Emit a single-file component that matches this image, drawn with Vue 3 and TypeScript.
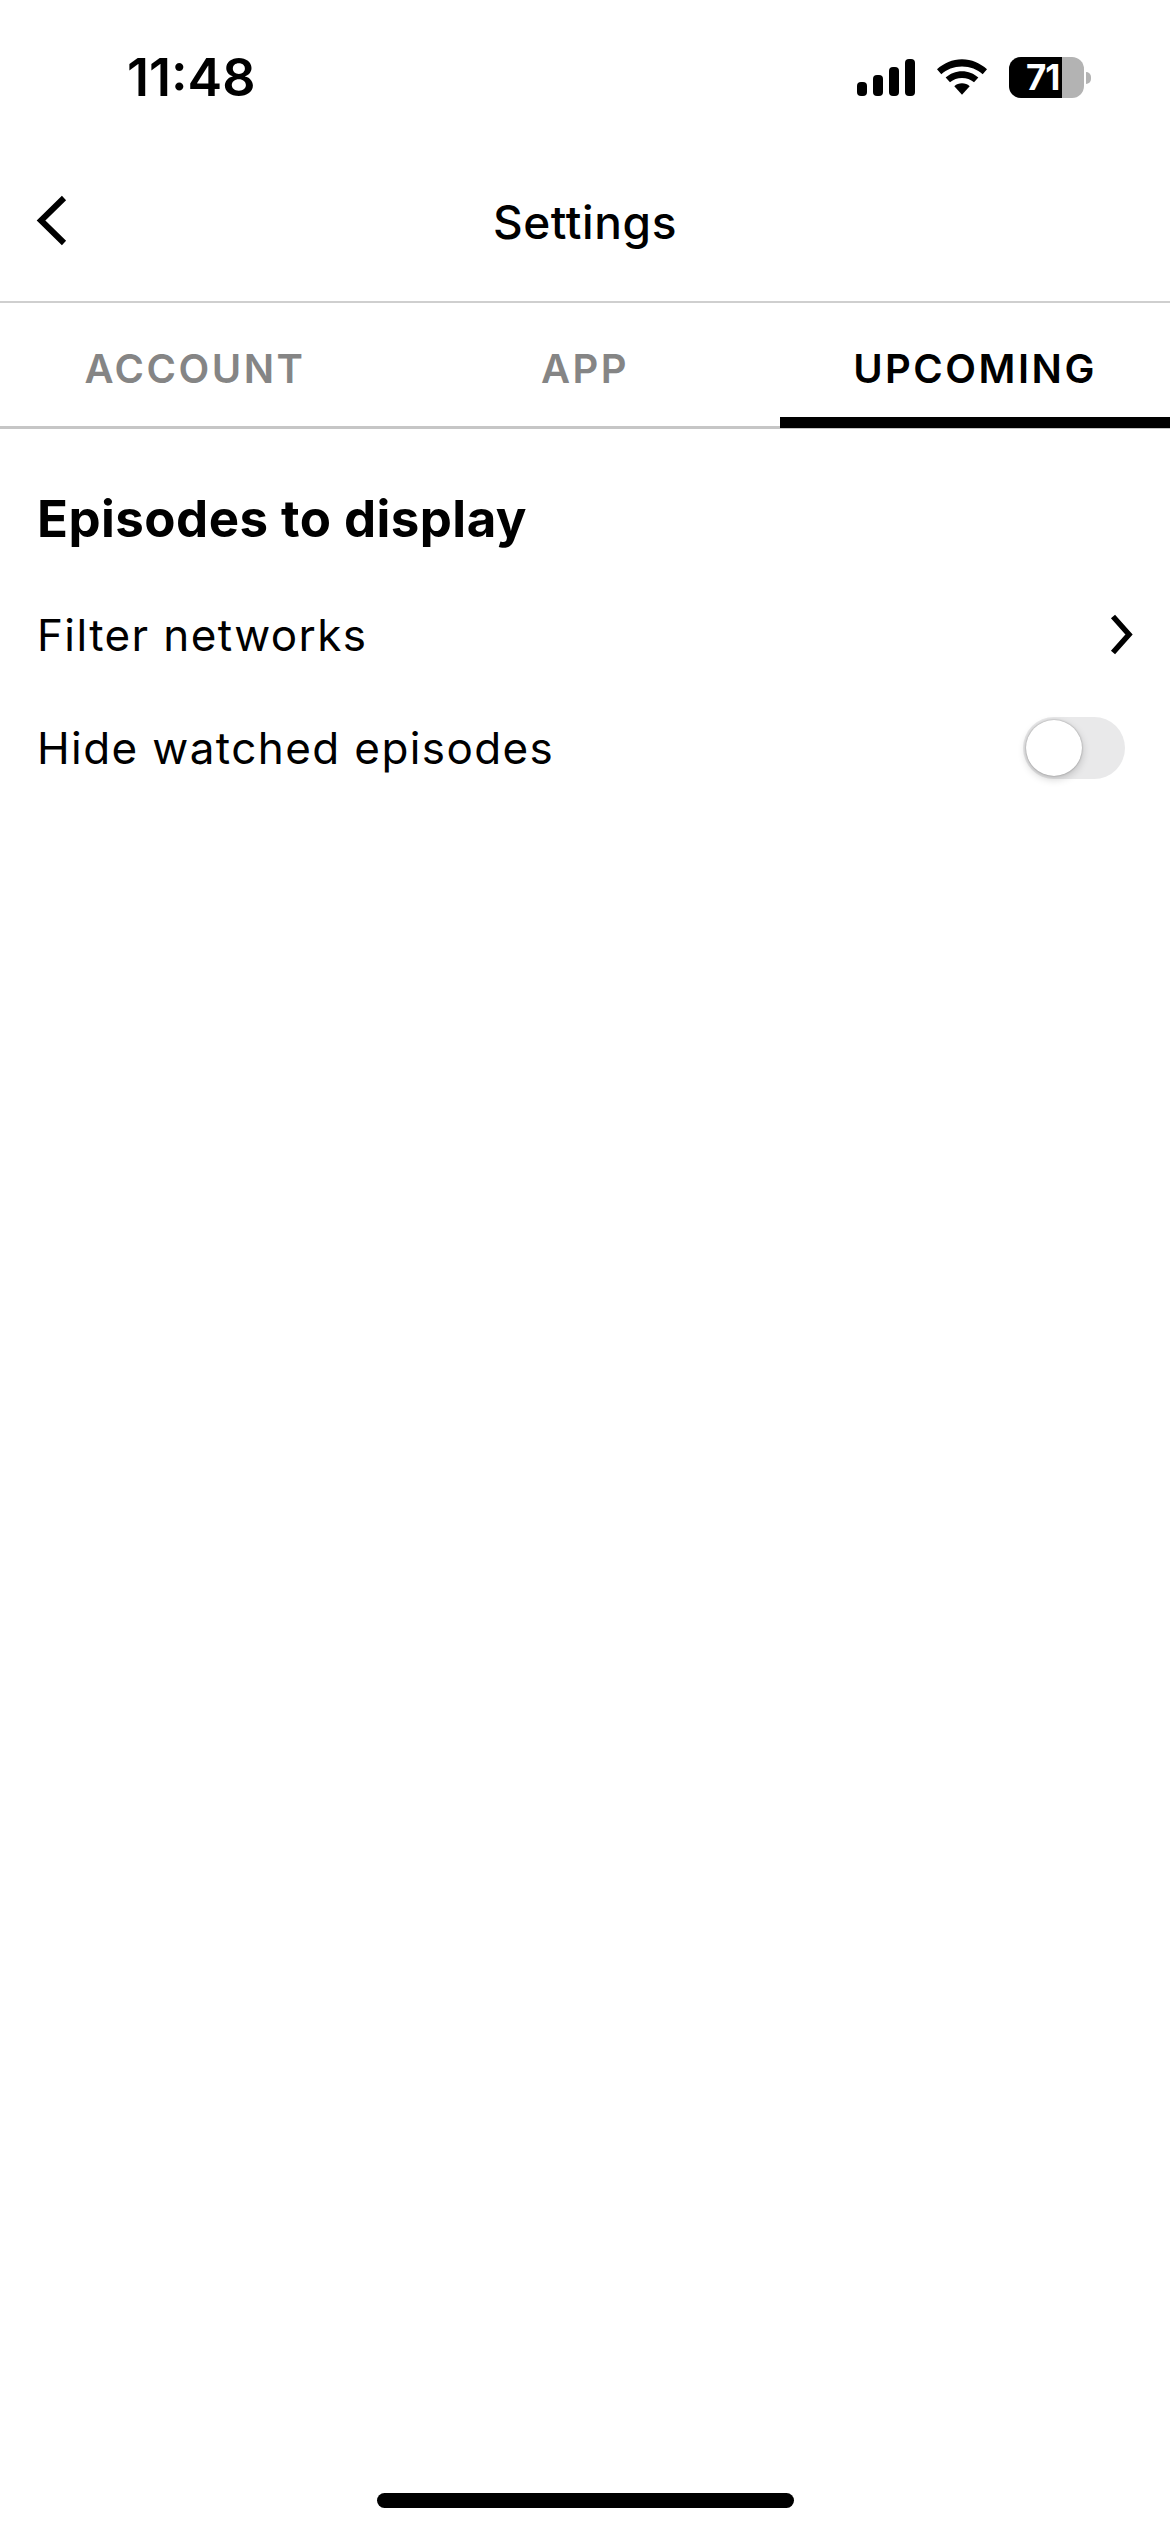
<script setup lang="ts">
import { ref } from 'vue';

const tabs = ['ACCOUNT', 'APP', 'UPCOMING'];
const activeTab = ref('UPCOMING');
const hideWatched = ref(false);
</script>

<template>
  <div class="screen">
    <div class="status">
      <span class="time">11:48</span>
      <div class="status-icons">
        <svg class="signal" width="58" height="37" viewBox="0 0 58 37">
          <rect x="0" y="23" width="10" height="14" rx="4" />
          <rect x="16" y="16" width="10" height="21" rx="4" />
          <rect x="32" y="8" width="10" height="29" rx="4" />
          <rect x="48" y="0" width="10" height="37" rx="4" />
        </svg>
        <svg class="wifi" width="50" height="37" viewBox="0 0 52 38">
          <path d="M26 0C16 0 7 4 0 10.500L4.500 15.500C10 10.500 17.500 7.500 26 7.500C34.500 7.500 42 10.500 47.500 15.500L52 10.500C45 4 36 0 26 0Z" />
          <path d="M26 12.500C19.500 12.500 13.500 15 9 19L13.500 24C17 21 21.300 19.500 26 19.500C30.700 19.500 35 21 38.500 24L43 19C38.500 15 32.500 12.500 26 12.500Z" />
          <path d="M26 25C23 25 20.300 26 18 28L26 37L34 28C31.700 26 29 25 26 25Z" />
        </svg>
        <div class="battery">
          <div class="battery-body">
            <div class="battery-fill"></div>
            <span class="battery-num">71</span>
          </div>
          <div class="battery-cap"></div>
        </div>
      </div>
    </div>

    <header class="nav">
      <svg class="back" width="36" height="54" viewBox="0 0 36 54">
        <path d="M31 5L8 27.500L31 50" fill="none" stroke="#000" stroke-width="6" />
      </svg>
      <span class="title">Settings</span>
    </header>

    <nav class="tabs">
      <button
        v-for="tab in tabs"
        :key="tab"
        class="tab"
        :class="{ active: tab === activeTab }"
        @click="activeTab = tab"
      >
        {{ tab }}
      </button>
    </nav>

    <main class="content">
      <h2 class="heading">Episodes to display</h2>
      <div class="row first">
        <span>Filter networks</span>
        <svg class="chevron" width="24" height="42" viewBox="0 0 24 42">
          <path d="M4 2.500L20 20.500L4 38.500" fill="none" stroke="#000" stroke-width="5.500" />
        </svg>
      </div>
      <div class="row">
        <span>Hide watched episodes</span>
        <div class="toggle" :class="{ on: hideWatched }" @click="hideWatched = !hideWatched">
          <div class="knob"></div>
        </div>
      </div>
    </main>

    <div class="home-bar"></div>
  </div>
</template>

<style>
html,
body {
  margin: 0;
  padding: 0;
  background: #fff;
}
</style>

<style scoped>
.screen {
  position: relative;
  width: 1170px;
  height: 2532px;
  background: #fff;
  color: #000;
  font-family: Inter, 'Noto Sans', sans-serif;
  overflow: hidden;
}

.status {
  height: 152px;
  box-sizing: border-box;
  padding: 0 79px 0 127px;
  display: flex;
  justify-content: space-between;
  align-items: flex-start;
}

.time {
  margin-top: 47px;
  font-size: 52px;
  line-height: 62px;
  font-weight: 600;
}

.status-icons {
  margin-top: 57px;
  height: 41px;
  display: flex;
  align-items: center;
  gap: 22px;
}

.signal,
.wifi {
  fill: #000;
  display: block;
}

.battery {
  display: flex;
  align-items: center;
  gap: 2px;
}

.battery-body {
  position: relative;
  width: 75px;
  height: 41px;
  border-radius: 12px;
  background: #b3b3b3;
}

.battery-fill {
  width: 53px;
  height: 100%;
  border-radius: 12px 0 0 12px;
  background: #000;
}

.battery-num {
  position: absolute;
  left: 17px;
  top: 0;
  font-size: 35px;
  line-height: 41px;
  font-weight: 700;
  letter-spacing: -1px;
  color: #fff;
}

.battery-cap {
  width: 5px;
  height: 12px;
  border-radius: 0 6px 6px 0;
  background: #b3b3b3;
}

.nav {
  height: 139px;
  padding-bottom: 10px;
  display: grid;
  grid-template-columns: 1fr auto 1fr;
  align-items: center;
  border-bottom: 2px solid #cfcfcf;
}

.back {
  margin: 0 0 3px 33px;
}

.title {
  font-size: 46px;
  font-weight: 500;
  letter-spacing: 0.6px;
}

.tabs {
  height: 123px;
  display: grid;
  grid-template-columns: repeat(3, 1fr);
  border-bottom: 3px solid #c6c6c6;
}

.tab {
  border: 0;
  padding: 16px 0 0;
  margin: 0 0 -2px;
  background: none;
  font-family: Inter, 'Noto Sans', sans-serif;
  font-size: 40px;
  font-weight: 600;
  letter-spacing: 2.5px;
  color: #858585;
  border-bottom: 11px solid transparent;
}

.tab.active {
  color: #000;
  border-bottom-color: #000;
}

.content {
  padding: 59px 37px 0;
}

.heading {
  margin: 0;
  font-size: 51px;
  line-height: 62px;
  font-weight: 700;
  letter-spacing: 0.45px;
}

.row {
  height: 113px;
  display: flex;
  align-items: center;
  justify-content: space-between;
  font-size: 44px;
  letter-spacing: 1.4px;
}

.row.first {
  margin-top: 28px;
}

.toggle {
  width: 102px;
  height: 62px;
  margin-right: 8px;
  position: relative;
  border-radius: 31px;
  background: #e9e9ea;
}

.knob {
  position: absolute;
  left: 3px;
  top: 3px;
  width: 56px;
  height: 56px;
  border-radius: 50%;
  background: #fff;
  box-shadow: 0 3px 8px rgba(0, 0, 0, 0.2), 0 0 2px rgba(0, 0, 0, 0.35);
}

.toggle.on {
  background: #34c759;
}

.toggle.on .knob {
  left: 43px;
}

.home-bar {
  position: absolute;
  left: 377px;
  top: 2493px;
  width: 417px;
  height: 15px;
  border-radius: 8px;
  background: #000;
}
</style>
